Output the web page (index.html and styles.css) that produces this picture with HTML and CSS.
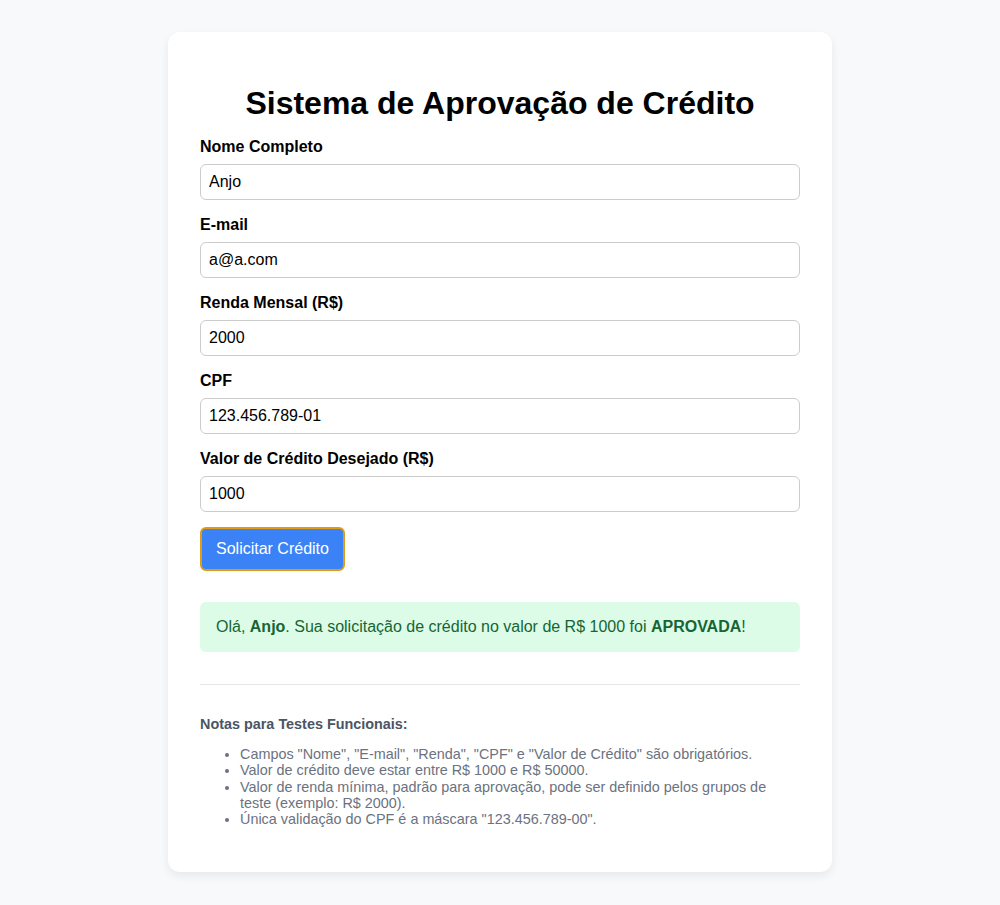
FILE: index.html
```html
<!DOCTYPE html>
<html lang="pt-BR">
<head>
<meta charset="utf-8">
<title>Sistema de Aprovação de Crédito</title>
<link rel="stylesheet" href="styles.css">
</head>
<body>
<div class="card">
  <h1 class="title">Sistema de Aprovação de Crédito</h1>
  <form class="form">
    <div class="field">
      <label class="label">Nome Completo</label>
      <input class="input" type="text" value="Anjo">
    </div>
    <div class="field">
      <label class="label">E-mail</label>
      <input class="input" type="text" value="a@a.com">
    </div>
    <div class="field">
      <label class="label">Renda Mensal (R$)</label>
      <input class="input" type="text" value="2000">
    </div>
    <div class="field">
      <label class="label">CPF</label>
      <input class="input" type="text" value="123.456.789-01">
    </div>
    <div class="field">
      <label class="label">Valor de Crédito Desejado (R$)</label>
      <input class="input" type="text" value="1000">
    </div>
    <button class="button" type="button">Solicitar Crédito</button>
  </form>
  <div class="result">Olá, <strong>Anjo</strong>. Sua solicitação de crédito no valor de R$ 1000 foi <strong>APROVADA</strong>!</div>
  <hr class="divider">
  <div class="notes">
    <p class="notes-title">Notas para Testes Funcionais:</p>
    <ul class="notes-list">
      <li>Campos "Nome", "E-mail", "Renda", "CPF" e "Valor de Crédito" são obrigatórios.</li>
      <li>Valor de crédito deve estar entre R$ 1000 e R$ 50000.</li>
      <li>Valor de renda mínima, padrão para aprovação, pode ser definido pelos grupos de teste (exemplo: R$ 2000).</li>
      <li>Única validação do CPF é a máscara "123.456.789-00".</li>
    </ul>
  </div>
</div>
</body>
</html>
```
FILE: styles.css
```css
html, body {
  margin: 0;
  padding: 0;
}
body {
  background: #f8f9fb;
  font-family: "Liberation Sans", Arial, sans-serif;
  color: #000;
  padding: 32px 0 33px;
}
.card {
  width: 600px;
  margin: 0 auto;
  background: #fff;
  border-radius: 12px;
  padding: 32px;
  box-shadow: 0 4px 10px rgba(0, 0, 0, 0.07);
}
.title {
  font-size: 32px;
  font-weight: bold;
  text-align: center;
  margin: 21px 0 16px;
  line-height: 37px;
}
.form {
  display: flex;
  flex-direction: column;
}
.field {
  display: flex;
  flex-direction: column;
  margin-bottom: 16px;
}
.field:last-of-type {
  margin-bottom: 15px;
}
.label {
  font-size: 16px;
  font-weight: bold;
  line-height: 18px;
  margin-bottom: 8px;
}
.input {
  font-family: "Liberation Sans", Arial, sans-serif;
  font-size: 16px;
  line-height: 18px;
  height: 36px;
  box-sizing: border-box;
  padding: 8px;
  border: 1px solid #ccc;
  border-radius: 6px;
  color: #000;
  outline: none;
}
.button {
  align-self: flex-start;
  font-family: "Liberation Sans", Arial, sans-serif;
  font-size: 16px;
  line-height: 18px;
  color: #fff;
  background: #3b82f6;
  border: 2px solid #e09b17;
  border-radius: 6px;
  padding: 11px 14px;
  height: 44px;
  box-sizing: border-box;
}
.result {
  margin-top: 31px;
  background: #dcfce7;
  color: #166534;
  border-radius: 6px;
  padding: 16px;
  font-size: 16px;
  line-height: 18px;
}
.divider {
  border: none;
  border-top: 1px solid #e5e7eb;
  margin: 32px 0 31px;
}
.notes-title {
  font-size: 14.4px;
  font-weight: bold;
  color: #4b5563;
  margin: 0 0 14px;
  line-height: 16px;
}
.notes-list {
  font-size: 14.4px;
  color: #6b7280;
  margin: 0 0 13px;
  padding-left: 40px;
  line-height: 16.25px;
}
```
